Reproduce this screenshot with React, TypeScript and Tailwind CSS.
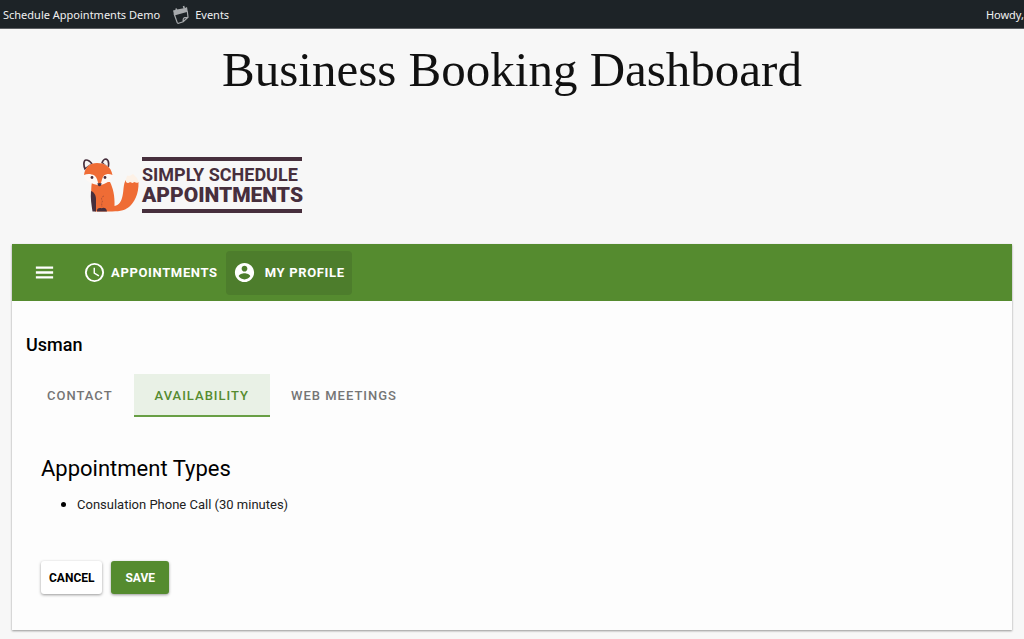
import { useState } from "react";

const tabs = ["Contact", "Availability", "Web Meetings"];

function EventsIcon() {
  return (
    <svg viewBox="0 0 18 20" className="h-5 w-[18px] shrink-0" aria-hidden="true">
      <path d="M1 5.500 5 4.500 13 3l2-1 .8 4.700L2.300 10.500z" fill="#a7aaad" />
      <path
        d="M2 8.500 5.200 17.500q.4 1 1.400.7l4.600-1.500 4.800-4.500-.7-6M11.200 16.700q-.4-3.500 1.200-4l3.400-.3"
        fill="none"
        stroke="#a7aaad"
        strokeWidth="1.200"
      />
      <path d="m4 3.500.8 2.500M11.500 1l.8 2.500" stroke="#a7aaad" strokeWidth="1.600" />
    </svg>
  );
}

function Fox() {
  return (
    <svg viewBox="0 0 56 56" className="h-14 w-14 shrink-0" aria-hidden="true">
      <path d="M2 12C0 7 1 3 3 3c2 0 4 1 6 4zM19 6c1-3 2-4 4-4 3 1 3 5 2 9z" fill="#f7f4f3" stroke="#472f3d" strokeWidth="1.700" />
      <path
        d="M9 25h18c3 6 5 14 4.500 24 5-1 7-5 8-10 1.500-6 .5-12 3.500-16 4 3 9 1 12.500 2C56 37 51 46 46 50c-5 4-11 4.500-20 4.500H12C9 47 7 35 9 25z"
        fill="#ef6c35"
      />
      <path
        d="M43 25c-.5-3 .5-5 1.500-6.500 2 1 3.500-.5 5.500-1.500 2 2 5 4 5.500 8.500-2 1-3-.5-4.500-.5-1.500 2-3 0-4 0-1.500 1.500-3 1-4 0z"
        fill="#fdf1e6"
      />
      <path d="M8 34c3 1 5 4 5 8v12.500H9.500C8.500 48 7.300 41 8 34z" fill="#472f3d" />
      <path d="M14 54.500c-.5-3 2-4 4.500-3.300 2-1 5-.7 5.500 3.300z" fill="#472f3d" />
      <path d="M21 39c-3 1-3 3-1.500 5-1 2-1 4-.5 6" fill="none" stroke="#a94c34" strokeWidth=".8" strokeDasharray="2 1" />
      <path
        d="M1 18C2 10 7 6 14 6s14 3 15.500 12c-1 6-7 9-13 10.500C8 27 1.500 24 1 18z"
        fill="#fdf8f5"
      />
      <path
        d="M1 18C2 10 7 6 14 6s14 3 15.500 12c-3-1.500-6-1.500-8.500.5-2 2-2 5-3.500 9h-2c-1-4-1.500-7-4-9C8 16.500 4 16.500 1 18z"
        fill="#ef6c35"
      />
      <circle cx="9" cy="20.500" r="1.400" fill="#472f3d" />
      <circle cx="22" cy="20.500" r="1.400" fill="#472f3d" />
      <path d="M14.200 26.500q2.300-1.200 4.600 0-.8 2.700-2.300 2.700t-2.300-2.700z" fill="#472f3d" />
    </svg>
  );
}

function Logo() {
  return (
    <div className="flex items-center gap-[3px] text-[#472f3d]">
      <Fox />
      <div className="w-[160px] border-y-4 border-[#472f3d] py-1 font-bold whitespace-nowrap">
        <div className="text-[18px] leading-5">SIMPLY SCHEDULE</div>
        <div className="text-[21px] leading-5 font-black">APPOINTMENTS</div>
      </div>
    </div>
  );
}

function Toolbar() {
  return (
    <nav className="flex h-[57px] items-center bg-[#558b2f] pl-5 text-[13px] font-bold tracking-wider text-white">
      <button aria-label="Menu" className="flex size-6 items-center justify-center">
        <svg viewBox="0 0 24 24" className="size-[23px] fill-current">
          <path d="M3 18.200h18v-2.400H3v2.400zm0-5h18v-2.400H3v2.400zm0-7.400v2.400h18V5.800H3z" />
        </svg>
      </button>
      <a href="#appointments" className="ml-[19px] flex h-11 items-center gap-[5px] px-2">
        <svg viewBox="0 0 24 24" className="size-[23px] fill-current">
          <path d="M12 2a10 10 0 1 0 0 20 10 10 0 0 0 0-20zm0 18a8 8 0 1 1 0-16 8 8 0 0 1 0 16zm.5-13H11v6l5.200 3.200.8-1.300-4.500-2.700V7z" />
        </svg>
        APPOINTMENTS
      </a>
      <a href="#profile" className="flex h-11 items-center gap-[9px] rounded bg-[#4d7d2c] px-[7px]">
        <svg viewBox="0 0 24 24" className="size-[23px] fill-current">
          <path d="M12 2C6.480 2 2 6.480 2 12s4.480 10 10 10 10-4.480 10-10S17.520 2 12 2zm0 3c1.660 0 3 1.340 3 3s-1.340 3-3 3-3-1.340-3-3 1.340-3 3-3zm0 14.200c-2.500 0-4.710-1.280-6-3.220.03-1.990 4-3.080 6-3.080 1.990 0 5.970 1.090 6 3.080-1.290 1.940-3.500 3.220-6 3.220z" />
        </svg>
        MY PROFILE
      </a>
    </nav>
  );
}

export default function App() {
  const [active, setActive] = useState("Availability");

  return (
    <div className="min-h-screen bg-[#f7f7f7] font-['Roboto',sans-serif] text-black">
      <header className="flex h-[29px] items-center justify-between overflow-hidden border-b border-[#5c5f63] bg-[#1d2327] pt-0.5 pl-[3px] font-['Noto_Sans',sans-serif] text-[11px] text-[#f0f0f1]">
        <div className="flex items-center gap-3">
          <a href="#site">Schedule Appointments Demo</a>
          <a href="#events" className="flex items-center gap-[5px]">
            <EventsIcon />
            Events
          </a>
        </div>
        <span>Howdy,</span>
      </header>

      <h1 className="pt-[9px] text-center font-['Liberation_Serif',serif] text-[49px] leading-[64px] text-[#111]">
        Business Booking Dashboard
      </h1>

      <div className="px-[83px] pt-[55px] pb-[31px]">
        <Logo />
      </div>

      <main className="mx-3 bg-[#fdfdfd] pb-9 shadow-[0_1px_2px_rgba(0,0,0,0.4)]">
        <Toolbar />
        <h2 className="px-[14px] pt-8 text-[18px] leading-6 font-medium">Usman</h2>

        <div role="tablist" className="mt-[17px] flex px-[14px]">
          {tabs.map((tab) => (
            <button
              key={tab}
              role="tab"
              aria-selected={tab === active}
              onClick={() => setActive(tab)}
              className={
                tab === active
                  ? "h-[43px] border-b-2 border-[#689f45] bg-[#e9f1e6] px-[21px] pt-0.5 text-[13px] font-medium tracking-[1px] text-[#558b2f] uppercase"
                  : "h-[43px] border-b-2 border-transparent px-[21px] pt-0.5 text-[13px] font-medium tracking-[1px] text-[#757575] uppercase"
              }
            >
              {tab}
            </button>
          ))}
        </div>

        <form className="px-[29px]" onSubmit={(e) => e.preventDefault()}>
          <h3 className="pt-9 text-[22px] leading-8">Appointment Types</h3>
          <ul className="mt-[7px] list-disc pl-9 text-[13px] leading-6 text-[#212121] marker:text-[15px] marker:text-black">
            <li>Consulation Phone Call (30 minutes)</li>
          </ul>
          <div className="mt-11 flex gap-[9px] text-[12px] font-bold">
            <button
              type="button"
              className="h-[33px] rounded-[3px] bg-white px-2 shadow-[0_1px_3px_rgba(0,0,0,0.4)]"
            >
              CANCEL
            </button>
            <button
              type="submit"
              className="h-[33px] rounded-[3px] bg-[#558b2f] px-[14px] text-white shadow-[0_1px_3px_rgba(0,0,0,0.4)]"
            >
              SAVE
            </button>
          </div>
        </form>
      </main>
    </div>
  );
}
